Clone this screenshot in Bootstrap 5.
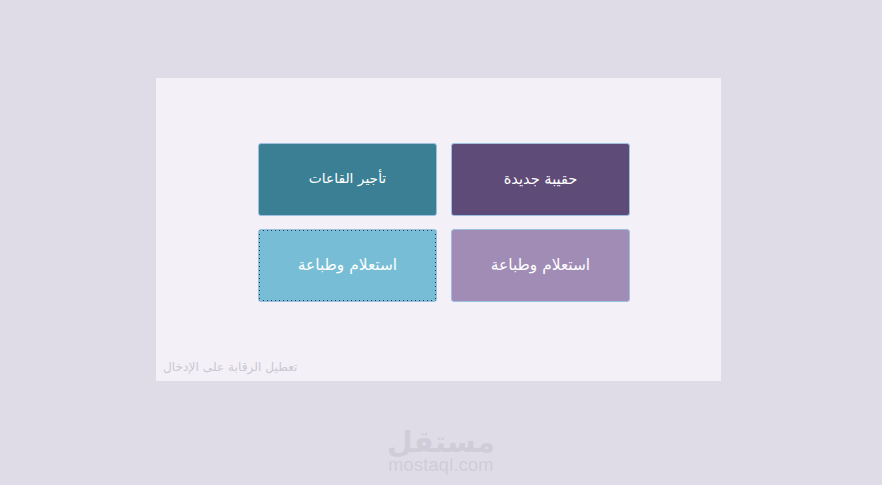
<!DOCTYPE html>
<html lang="ar" dir="rtl">
<head>
<meta charset="utf-8">
<title>مستقل</title>
<link href="https://cdn.jsdelivr.net/npm/bootstrap@5.3.0/dist/css/bootstrap.min.css" rel="stylesheet">
<style>
html,body{height:485px;overflow:hidden}
body{background:#dfdce8;font-family:"DejaVu Sans",sans-serif;padding-top:78px}
.stage{width:565px;height:303px;background:#f3f1f7;padding-top:65px;margin-right:5px}
.tile-grid{display:grid;grid-template-columns:179px 179px;grid-auto-rows:73px;column-gap:14px;row-gap:13px;justify-content:center;padding-left:11px}
.tile{border:1px solid #9dbfe0;border-radius:3px;color:#fff;padding:0 0 2px}
.tile-a{background:#5f4b78;font-size:14.6px}
.tile-b{background:#3a7f94;font-size:13.8px}
.tile-c{background:#a18cb6;font-size:15.4px;padding:0}
.tile-d{font-size:15.4px;padding:0;background-color:#76bdd5;background-image:linear-gradient(90deg,#24385a 1px,transparent 1px),linear-gradient(90deg,#24385a 1px,transparent 1px),linear-gradient(#24385a 1px,transparent 1px),linear-gradient(#24385a 1px,transparent 1px);background-size:4px 1px,4px 1px,1px 4px,1px 4px;background-repeat:repeat-x,repeat-x,repeat-y,repeat-y;background-position:0 0,0 100%,0 0,100% 0}
.tile:hover{color:#fff;border-color:#9dbfe0}
.tile-a:hover{background:#5f4b78}
.tile-b:hover{background:#3a7f94}
.tile-c:hover{background:#a18cb6}
.tile-d:hover{background-color:#76bdd5}
.opt-out{color:#cbc8d1;font-size:12.2px;line-height:14px;padding-left:7px;margin-top:58px}
.brand-name{color:#d0cdd9;font-size:29.5px;font-weight:700;line-height:29px;margin-top:47px}
.brand-site{color:#d0cdd9;font-size:18px;font-family:"Liberation Sans",sans-serif;line-height:17px;letter-spacing:.3px}
</style>
</head>
<body class="d-flex flex-column align-items-center">
<main class="stage d-flex flex-column">
<div class="tile-grid">
<button class="btn tile tile-a" type="button">حقيبة جديدة</button>
<button class="btn tile tile-b" type="button">تأجير القاعات</button>
<button class="btn tile tile-c" type="button">استعلام وطباعة</button>
<button class="btn tile tile-d" type="button">استعلام وطباعة</button>
</div>
<div class="opt-out text-start" dir="ltr">تعطيل الرقابة على الإدخال</div>
</main>
<div class="brand-name text-center">مستقل</div>
<div class="brand-site text-center" dir="ltr">mostaql.com</div>
</body>
</html>
